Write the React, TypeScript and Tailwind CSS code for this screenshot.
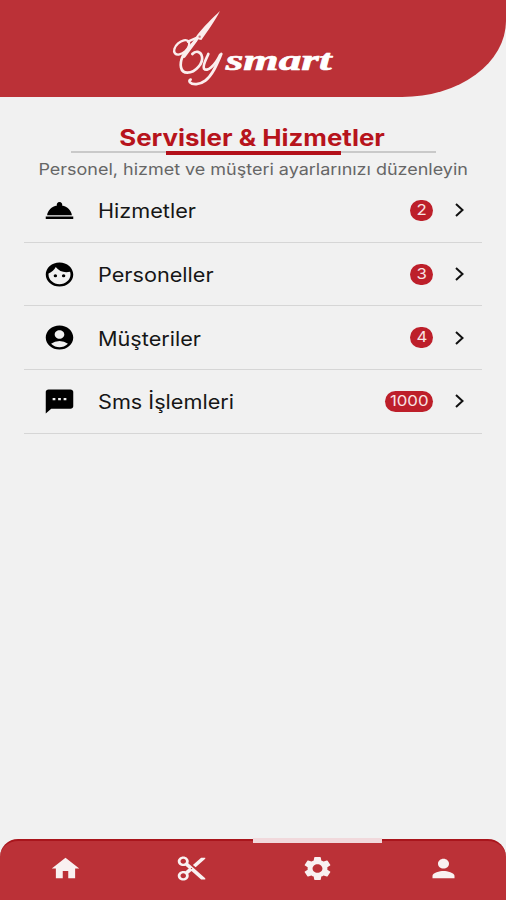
import type { ReactNode } from 'react';
import { MdAccountCircle, MdContentCut, MdFace, MdHome, MdPerson, MdRoomService, MdSettings, MdSms } from 'react-icons/md';

const services = [
  { label: 'Hizmetler', count: 2, icon: MdRoomService },
  { label: 'Personeller', count: 3, icon: MdFace },
  { label: 'Müşteriler', count: 4, icon: MdAccountCircle },
  { label: 'Sms İşlemleri', count: 1000, icon: MdSms },
];

const tabs = [
  { name: 'home', icon: MdHome },
  { name: 'cut', icon: MdContentCut },
  { name: 'settings', icon: MdSettings },
  { name: 'profile', icon: MdPerson },
];

const Logo = () => (
  <svg width="170" height="84" viewBox="0 0 510 252" fill="none" stroke="#fbeeee" strokeLinecap="round" strokeLinejoin="round">
    {/* scissors */}
    <path d="M156 21 C134 41 105 71 88 92 L80 104 L100 108 C118 82 141 51 156 21Z" fill="#fbeeee" stroke="none" />
    <circle cx="95" cy="98" r="3.500" fill="#c8797c" stroke="none" />
    <ellipse cx="41" cy="130" rx="27" ry="16" transform="rotate(-42 41 130)" strokeWidth="7" />
    <path d="M84 102 L60 113" strokeWidth="7" />
    {/* b */}
    <path d="M87 104 C70 127 52 140 44 157 C34 180 36 206 58 206 C84 206 106 176 102 158 C98 140 82 140 73 150" strokeWidth="8" />
    <path d="M84 108 L48 157" strokeWidth="10" />
    {/* y */}
    <path d="M121 150 C116 163 103 183 108 194 C117 205 141 185 156 153" strokeWidth="8" />
    <path d="M160 150 C148 178 135 212 112 230 C95 243 73 243 66 235 C63 231 64 228 68 227" strokeWidth="8" />
    <text x="173" y="197" fill="#fff" stroke="#fff" strokeWidth="2" fontSize="89" fontWeight="700" fontStyle="italic" textLength="318" lengthAdjust="spacingAndGlyphs" className="font-['Liberation_Serif',serif]">smart</text>
  </svg>
);

const Row = ({ icon, label, count }: { icon: ReactNode; label: string; count: number }) => (
  <li className="h-[63.700px] border-b border-[#d6d6d6] flex items-center pl-[19px] pr-[17px]">
    {icon}
    <span className="ml-[22px] pt-[3px] flex-1 text-[19.500px] text-[#161616]">
      <span className="inline-block origin-left scale-x-[1.11]">{label}</span>
    </span>
    <span className="h-[21px] min-w-[23px] px-[5px] rounded-full bg-[#bd1f2a] text-[#f8e4e4] text-[15px] flex items-center justify-center">
      <span className={count > 99 ? 'px-[2px] scale-x-[1.12]' : 'scale-x-[1.12]'}>{count}</span>
    </span>
    <svg width="10" height="14" viewBox="0 0 10 14" className="ml-[22px]" fill="none" stroke="#111" strokeWidth="2">
      <path d="M1 1l6.500 6-6.500 6" />
    </svg>
  </li>
);

export default function App() {
  return (
    <div className="h-[900px] w-[506px] bg-[#f1f1f1] flex flex-col overflow-hidden font-[Inter,sans-serif]">
      <header className="h-[97px] shrink-0 bg-[#bb3137] rounded-br-[104px_76px] pt-1 flex justify-center">
        <Logo />
      </header>

      <main className="flex-1 flex flex-col items-center pt-[26px]">
        <h1 className="h-[28px] -ml-[2px] text-[23px] leading-[30px] font-bold text-[#b7141c] whitespace-nowrap scale-x-[1.125]">Servisler &amp; Hizmetler</h1>
        <div className="h-[4px] w-[365px] flex items-start justify-center">
          <span className="h-[2px] flex-1 bg-[#c9c9c9]" />
          <span className="h-[4px] w-[175px] bg-[#b3101a]" />
          <span className="h-[2px] flex-1 bg-[#c9c9c9]" />
        </div>
        <p className="h-[24px] text-[16px] leading-[28px] text-[#666] whitespace-nowrap scale-x-[1.123]">Personel, hizmet ve müşteri ayarlarınızı düzenleyin</p>
        <ul className="w-[458px]">
          {services.map(({ label, count, icon: Icon }) => (
            <Row key={label} label={label} count={count} icon={<Icon className="w-[33px] h-[29px]" preserveAspectRatio="none" />} />
          ))}
        </ul>
      </main>

      <nav className="relative h-[61px] shrink-0 bg-[#bb3137] border-t-2 border-[#a9151c] rounded-t-[18px] flex pb-[4px] pl-[2px]">
        <span className="absolute -top-[3px] left-[253px] w-[129px] h-[5px] bg-[#f1d9dc]" />
        {tabs.map(({ name, icon: Icon }) => (
          <div key={name} className="flex-1 flex items-center justify-center text-[#f9f1f1]">
            <Icon className="w-[33px] h-[29px]" preserveAspectRatio="none" />
          </div>
        ))}
      </nav>
    </div>
  );
}
